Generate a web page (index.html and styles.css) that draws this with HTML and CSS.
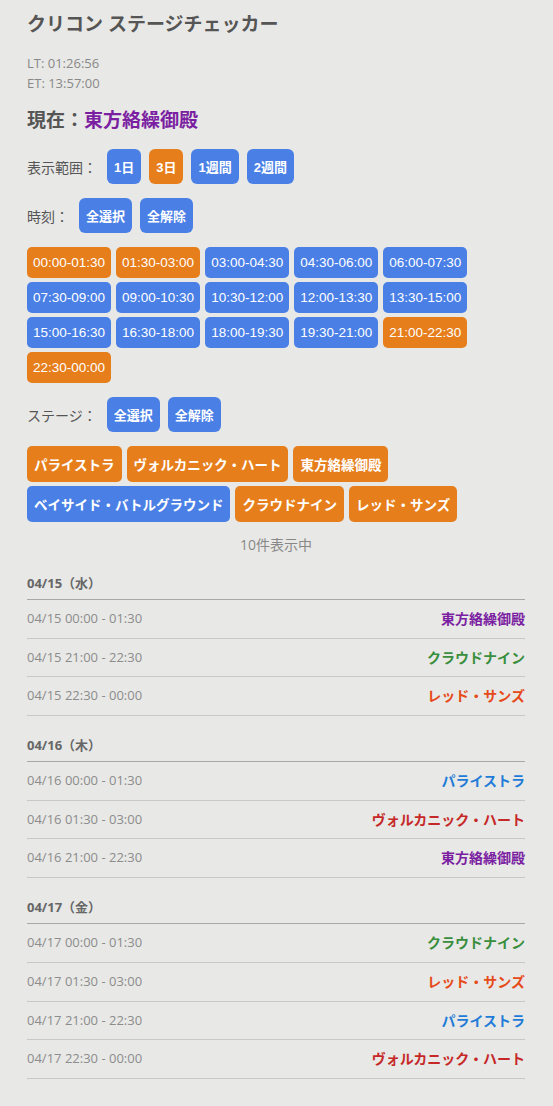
FILE: index.html
```html
<!DOCTYPE html>
<html lang="ja">
<head>
<meta charset="utf-8">
<title>クリコン ステージチェッカー</title>
<link rel="stylesheet" href="styles.css">
</head>
<body>
<div class="app">
  <h1 class="title">クリコン ステージチェッカー</h1>
  <div class="clocks">
    <div class="clock">LT: 01:26:56</div>
    <div class="clock">ET: 13:57:00</div>
  </div>
  <div class="current">現在：<span class="c-purple">東方絡繰御殿</span></div>

  <div class="ctrl-row range">
    <span class="ctrl-label">表示範囲：</span>
    <div class="btns">
      <button class="btn blue">1日</button>
      <button class="btn orange">3日</button>
      <button class="btn blue">1週間</button>
      <button class="btn blue">2週間</button>
    </div>
  </div>

  <div class="ctrl-row">
    <span class="ctrl-label">時刻：</span>
    <div class="btns">
      <button class="btn blue">全選択</button>
      <button class="btn blue">全解除</button>
    </div>
  </div>

  <div class="chips times">
    <button class="chip orange">00:00-01:30</button>
    <button class="chip orange">01:30-03:00</button>
    <button class="chip blue">03:00-04:30</button>
    <button class="chip blue">04:30-06:00</button>
    <button class="chip blue">06:00-07:30</button>
    <button class="chip blue">07:30-09:00</button>
    <button class="chip blue">09:00-10:30</button>
    <button class="chip blue">10:30-12:00</button>
    <button class="chip blue">12:00-13:30</button>
    <button class="chip blue">13:30-15:00</button>
    <button class="chip blue">15:00-16:30</button>
    <button class="chip blue">16:30-18:00</button>
    <button class="chip blue">18:00-19:30</button>
    <button class="chip blue">19:30-21:00</button>
    <button class="chip orange">21:00-22:30</button>
    <button class="chip orange">22:30-00:00</button>
  </div>

  <div class="ctrl-row">
    <span class="ctrl-label">ステージ：</span>
    <div class="btns">
      <button class="btn blue">全選択</button>
      <button class="btn blue">全解除</button>
    </div>
  </div>

  <div class="chips stages">
    <button class="chip bold orange">パライストラ</button>
    <button class="chip bold orange">ヴォルカニック・ハート</button>
    <button class="chip bold orange">東方絡繰御殿</button>
    <button class="chip bold blue">ベイサイド・バトルグラウンド</button>
    <button class="chip bold orange">クラウドナイン</button>
    <button class="chip bold orange">レッド・サンズ</button>
  </div>

  <div class="count">10件表示中</div>

  <section class="day">
    <div class="day-head">04/15（水）</div>
    <div class="row"><span class="time">04/15 00:00 - 01:30</span><span class="stage c-purple">東方絡繰御殿</span></div>
    <div class="row"><span class="time">04/15 21:00 - 22:30</span><span class="stage c-green">クラウドナイン</span></div>
    <div class="row"><span class="time">04/15 22:30 - 00:00</span><span class="stage c-orange">レッド・サンズ</span></div>
  </section>

  <section class="day">
    <div class="day-head">04/16（木）</div>
    <div class="row"><span class="time">04/16 00:00 - 01:30</span><span class="stage c-blue">パライストラ</span></div>
    <div class="row"><span class="time">04/16 01:30 - 03:00</span><span class="stage c-red">ヴォルカニック・ハート</span></div>
    <div class="row"><span class="time">04/16 21:00 - 22:30</span><span class="stage c-purple">東方絡繰御殿</span></div>
  </section>

  <section class="day">
    <div class="day-head">04/17（金）</div>
    <div class="row"><span class="time">04/17 00:00 - 01:30</span><span class="stage c-green">クラウドナイン</span></div>
    <div class="row"><span class="time">04/17 01:30 - 03:00</span><span class="stage c-orange">レッド・サンズ</span></div>
    <div class="row"><span class="time">04/17 21:00 - 22:30</span><span class="stage c-blue">パライストラ</span></div>
    <div class="row"><span class="time">04/17 22:30 - 00:00</span><span class="stage c-red">ヴォルカニック・ハート</span></div>
  </section>
</div>
</body>
</html>
```

FILE: styles.css
```css
html, body {
  margin: 0;
  padding: 0;
  background: #e8e8e6;
}

body {
  font-family: "Open Sans", "Noto Sans CJK JP", sans-serif;
  color: #555;
}

.app {
  padding: 12px 28px 28px 27px;
}

.title {
  margin: 0;
  font-size: 19px;
  line-height: 24px;
  font-weight: 700;
  color: #555;
}

.clocks {
  margin-top: 17px;
}

.clock {
  font-size: 13px;
  line-height: 20px;
  color: #888;
}

.current {
  margin-top: 14px;
  font-size: 19px;
  line-height: 26px;
  font-weight: 700;
  color: #555;
}

.ctrl-row {
  display: flex;
  align-items: center;
  margin-top: 14px;
}

.ctrl-row.range {
  margin-top: 16px;
}

.ctrl-label {
  font-size: 14px;
  color: #555;
  margin-right: 10px;
}

.btns {
  display: flex;
  gap: 8px;
}

button {
  border: none;
  color: #fff;
  font-family: "Liberation Sans", "Noto Sans CJK JP", sans-serif;
  cursor: pointer;
  margin: 0;
}

.btn {
  height: 35px;
  padding: 0 7px;
  font-size: 13px;
  font-weight: 700;
  border-radius: 6px;
}

.blue { background: #4a80e6; }
.orange { background: #e67e1c; }

.chips {
  display: flex;
  flex-wrap: wrap;
  gap: 4px 5px;
  margin-top: 14px;
}

.chip {
  height: 31px;
  padding: 0 6px;
  font-size: 13.5px;
  font-weight: 400;
  border-radius: 5px;
}

.chips.stages .chip {
  height: 36px;
  padding: 0 7px;
}

.chip.bold {
  font-weight: 700;
}

.count {
  margin-top: 14px;
  text-align: center;
  font-size: 14px;
  line-height: 18px;
  color: #888;
}

.day {
  margin-top: 20px;
}

.day-head {
  font-size: 13px;
  line-height: 18px;
  font-weight: 700;
  color: #666;
  padding-bottom: 7px;
  border-bottom: 1px solid #a9a9a9;
}

.row {
  display: flex;
  justify-content: space-between;
  align-items: center;
  height: 17.7px;
  padding: 10px 0;
  border-bottom: 1px solid #c8c8c8;
  font-size: 13px;
  line-height: 17.7px;
}

.time {
  color: #8c8c8c;
}

.stage {
  font-weight: 700;
  font-size: 14px;
}

.c-purple { color: #7b1fa2; }
.c-green { color: #388e3c; }
.c-orange { color: #e64a19; }
.c-blue { color: #1e7bd8; }
.c-red { color: #c62828; }
```
